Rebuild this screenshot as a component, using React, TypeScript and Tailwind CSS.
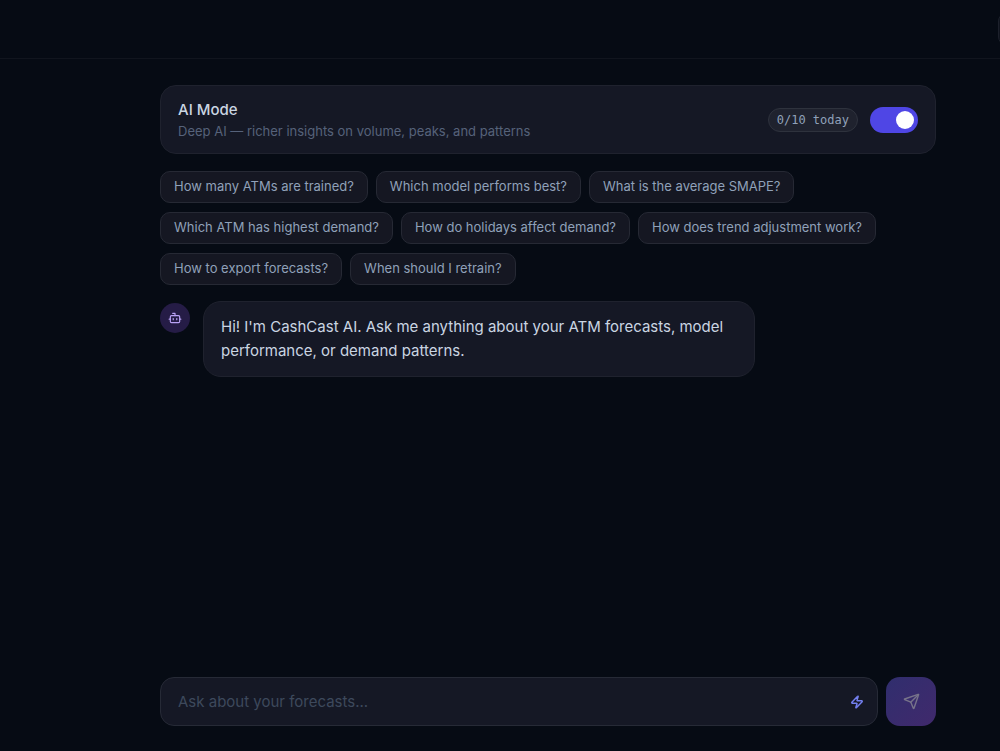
import { useState } from 'react';
import { Bot, Send, Zap } from 'lucide-react';

const SUGGESTIONS = [
  'How many ATMs are trained?',
  'Which model performs best?',
  'What is the average SMAPE?',
  'Which ATM has highest demand?',
  'How do holidays affect demand?',
  'How does trend adjustment work?',
  'How to export forecasts?',
  'When should I retrain?',
];

export default function App() {
  const [input, setInput] = useState('');
  const [aiMode, setAiMode] = useState(true);

  return (
    <div className="flex min-h-screen flex-col bg-[#060b14] font-['Inter',sans-serif] text-slate-300">
      <header className="flex h-[59px] items-center justify-end overflow-hidden border-b border-[#11151e]">
        <button
          type="button"
          aria-label="Menu"
          className="-mr-8 h-8 w-[34px] rounded-lg border border-[#1c202b] bg-[#10141e]"
        />
      </header>

      <main className="flex flex-1 flex-col pt-[26px] pr-16 pb-[25px] pl-40">
        <section className="flex items-center justify-between rounded-2xl border border-[#1f222e] bg-[#151825] px-[17px] pt-[13px] pb-3">
          <div>
            <h2 className="text-[15px] leading-[22px] font-medium text-slate-300">AI Mode</h2>
            <p className="text-[13px] leading-5 text-[#56627a]">
              Deep AI — richer insights on volume, peaks, and patterns
            </p>
          </div>
          <div className="flex items-center gap-3">
            <span className="rounded-full border border-[#2e323d] bg-[#1f222e] px-2 font-['DejaVu_Sans_Mono',monospace] text-[12px] leading-[22px] text-slate-400">
              0/10 today
            </span>
            <label className="flex cursor-pointer">
              <input
                type="checkbox"
                aria-label="AI Mode"
                checked={aiMode}
                onChange={(e) => setAiMode(e.target.checked)}
                className="peer sr-only"
              />
              <span className="flex h-[26px] w-12 items-center rounded-full bg-slate-700 px-1 transition peer-checked:justify-end peer-checked:bg-[#4f46e5]">
                <span className="size-[18px] rounded-full bg-white" />
              </span>
            </label>
          </div>
        </section>

        <div className="mt-[17px] flex flex-wrap gap-x-2 gap-y-[9px]">
          {SUGGESTIONS.map((text) => (
            <button
              key={text}
              type="button"
              onClick={() => setInput(text)}
              className="h-8 rounded-[10px] border border-[#262934] bg-[#151722] px-[13px] pb-0.5 text-[13px] leading-5 text-slate-400"
            >
              {text}
            </button>
          ))}
        </div>

        <div className="mt-4 flex flex-1 items-start gap-[13px]">
          <div className="mt-0.5 flex size-[30px] shrink-0 items-center justify-center rounded-full bg-[#251c46]">
            <Bot size={14} className="text-[#b9a2f5]" />
          </div>
          <div className="max-w-[552px] rounded-[18px] border border-[#1f222e] bg-[#151825] px-[17px] py-[13px] text-[15px] leading-6 text-slate-300">
            Hi! I'm CashCast AI. Ask me anything about your ATM forecasts, model performance, or demand patterns.
          </div>
        </div>

        <form className="flex gap-2" onSubmit={(e) => e.preventDefault()}>
          <div className="relative flex-1">
            <input
              type="text"
              aria-label="Question"
              value={input}
              onChange={(e) => setInput(e.target.value)}
              placeholder="Ask about your forecasts..."
              className="h-[49px] w-full rounded-[14px] border border-[#262a36] bg-[#151825] pr-12 pl-[17px] text-[15px] text-slate-200 placeholder:text-[#3d495c] focus:outline-none"
            />
            <Zap size={14} strokeWidth={2.5} className="absolute top-[18px] right-3.5 text-[#7480f0]" />
          </div>
          <button
            type="submit"
            aria-label="Send"
            disabled={!input}
            className="flex h-[49px] w-[50px] items-center justify-center rounded-[14px] bg-linear-to-br from-[#4f46e5] to-[#7c3aed] text-white disabled:from-[#302e6e] disabled:to-[#40296c] disabled:text-[#77738a]"
          >
            <Send size={17} />
          </button>
        </form>
      </main>
    </div>
  );
}
